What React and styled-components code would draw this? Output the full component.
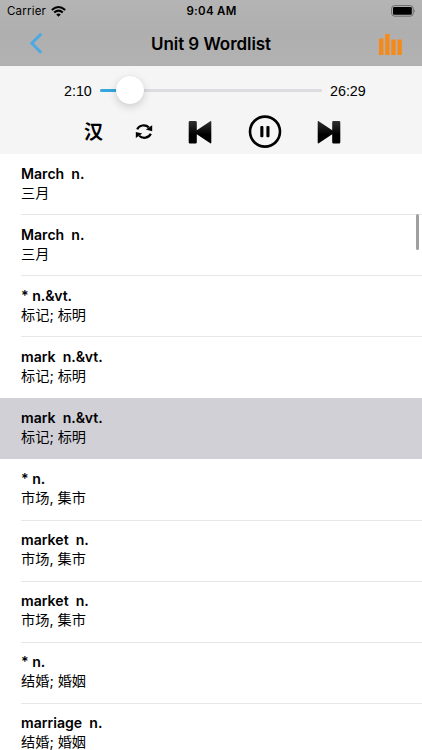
import styled, { createGlobalStyle } from 'styled-components';

const GlobalStyle = createGlobalStyle`
  * {
    box-sizing: border-box;
  }

  body {
    margin: 0;
    overflow: hidden;
    background: #fff;
    color: #000;
    font-family: Inter, 'Noto Sans CJK SC', sans-serif;
  }
`;

const Screen = styled.div`
  position: relative;
  display: flex;
  flex-direction: column;
  width: 422px;
  height: 750px;
  overflow: hidden;
`;

const Header = styled.header`
  flex: none;
  height: 66px;
  background: linear-gradient(#b4b4b4, #afafaf 50%, #b2b2b2);
  border-bottom: 1px solid #b0b0b0;
`;

const StatusBar = styled.div`
  display: grid;
  grid-template-columns: 1fr auto 1fr;
  align-items: center;
  height: 22px;
  padding: 0 6px 0 7px;
`;

const Carrier = styled.div`
  display: flex;
  align-items: center;
  gap: 5px;
  font-size: 11.5px;
  letter-spacing: 0.2px;
`;

const Clock = styled.div`
  font-size: 11.5px;
  font-weight: 600;
  letter-spacing: 0.3px;
`;

const Battery = styled.svg`
  justify-self: end;
`;

const NavBar = styled.div`
  display: grid;
  grid-template-columns: 1fr auto 1fr;
  align-items: center;
  height: 43px;
  padding: 0 19px 0 29px;
`;

const Title = styled.h1`
  margin: 0 10px 0 0;
  font-size: 17px;
  font-weight: 600;
  line-height: 20px;
  letter-spacing: -0.05px;
`;

const ChartIcon = styled.svg`
  justify-self: end;
`;

const Player = styled.section`
  flex: none;
  height: 88px;
  background: #f5f5f5;
`;

const Progress = styled.div`
  display: flex;
  align-items: center;
  height: 49px;
  padding-left: 64px;
`;

const Time = styled.span`
  width: ${(props) => props.$width}px;
  font-family: 'Liberation Sans', sans-serif;
  font-size: 14.3px;
`;

const Track = styled.div`
  position: relative;
  width: 222px;
  height: 3px;
  margin-right: 8px;
  border-radius: 2px;
  background: #dcdce0;
`;

const Played = styled.div`
  width: 30px;
  height: 3px;
  border-radius: 2px;
  background: #35a7dc;
`;

const Knob = styled.div`
  position: absolute;
  top: -13.5px;
  left: 16px;
  width: 28px;
  height: 28px;
  border-radius: 50%;
  background: #fff;
  box-shadow: 0 3px 8px rgba(0, 0, 0, 0.16), 0 0 1px rgba(0, 0, 0, 0.12);
`;

const Controls = styled.div`
  display: flex;
  align-items: center;
  height: 34px;
  padding-left: 84px;
`;

const Control = styled.div`
  display: flex;
  flex: none;
  align-items: center;
  justify-content: center;
  width: ${(props) => props.$width}px;
  height: 34px;
  margin-right: ${(props) => props.$gap || 0}px;
`;

const Glyph = styled.span`
  height: 34px;
  font-family: 'Noto Sans CJK SC', sans-serif;
  font-size: 19px;
  font-weight: 700;
  line-height: 31px;
`;

const List = styled.ul`
  flex: none;
  margin: 0;
  padding: 0;
  list-style: none;
`;

const Row = styled.li`
  height: 61.1px;
  padding-left: 21px;
  background: ${(props) => (props.$selected ? '#d1d0d7' : '#fff')};
`;

const RowBody = styled.div`
  height: 100%;
  padding-top: 9.5px;
  border-bottom: 1px solid ${(props) => (props.$hideLine ? 'transparent' : '#e7e7e8')};
`;

const Word = styled.div`
  height: 19px;
  font-size: 14.1px;
  font-weight: 600;
  line-height: 20px;
  white-space: pre;
`;

const Meaning = styled.div`
  height: 20px;
  font-size: 14.2px;
  line-height: 20px;
  white-space: pre;
`;

const ScrollBar = styled.div`
  position: absolute;
  top: 214px;
  right: 3px;
  width: 3px;
  height: 36px;
  border-radius: 2px;
  background: #a0a0a0;
`;

const words = [
  { word: 'March  n.', meaning: '三月' },
  { word: 'March  n.', meaning: '三月' },
  { word: '* n.&vt.', meaning: '标记; 标明' },
  { word: 'mark  n.&vt.', meaning: '标记; 标明' },
  { word: 'mark  n.&vt.', meaning: '标记; 标明' },
  { word: '* n.', meaning: '市场, 集市' },
  { word: 'market  n.', meaning: '市场, 集市' },
  { word: 'market  n.', meaning: '市场, 集市' },
  { word: '* n.', meaning: '结婚; 婚姻' },
  { word: 'marriage  n.', meaning: '结婚; 婚姻' },
];

const selected = 4;

const App = () => {
  return (
    <Screen>
      <GlobalStyle />
      <Header>
        <StatusBar>
          <Carrier>
            Carrier
            <svg width="15" height="11" viewBox="0 0 15 11" fill="none" stroke="#000" strokeWidth="2">
              <path d="M0.8 4Q7.5 -1.9 14.2 4" />
              <path d="M3.2 6.5Q7.5 2.7 11.8 6.5" />
              <path d="M7.5 10.7L5.2 8.4Q7.5 6.5 9.8 8.4Z" fill="#000" stroke="none" />
            </svg>
          </Carrier>
          <Clock>9:04 AM</Clock>
          <Battery width="25" height="12" viewBox="0 0 25 12">
            <rect x="0.6" y="0.6" width="21.6" height="10.6" rx="3" fill="none" stroke="#6b6b6b" />
            <rect x="2" y="2" width="18.8" height="7.8" rx="1.2" />
            <path d="M23.4 4.2Q25 5.9 23.4 7.6Z" fill="#6b6b6b" />
          </Battery>
        </StatusBar>
        <NavBar>
          <svg width="14" height="22" viewBox="0 0 14 22">
            <path d="M12.3 0.8L2.8 10.2L12.3 19.7" fill="none" stroke="#4ea9e2" strokeWidth="3" />
          </svg>
          <Title>Unit 9 Wordlist</Title>
          <ChartIcon width="24" height="22" viewBox="0 0 24 22" fill="#f58a1b">
            <rect x="0" y="5.5" width="4.4" height="16.5" />
            <rect x="6.2" y="1" width="4.4" height="21" />
            <rect x="12.3" y="6.5" width="4.4" height="15.5" />
            <rect x="18.4" y="6.5" width="4.4" height="15.5" />
          </ChartIcon>
        </NavBar>
      </Header>

      <Player>
        <Progress>
          <Time $width={36}>2:10</Time>
          <Track>
            <Played />
            <Knob />
          </Track>
          <Time $width={40}>26:29</Time>
        </Progress>
        <Controls>
          <Control $width={19} $gap={32}>
            <Glyph>汉</Glyph>
          </Control>
          <Control $width={18} $gap={35}>
            <svg width="18" height="18" viewBox="0 0 18 18">
              <g fill="none" stroke="#000" strokeWidth="2.2">
                <path d="M2.2 6.4A7 6.4 0 0 1 13.8 4.4" />
                <path d="M15.8 10.8A7 6.4 0 0 1 4.2 12.8" />
              </g>
              <path d="M17.2 2.2V8.2L10.8 6.6Z" />
              <path d="M0.8 15V9L7.2 10.6Z" />
            </svg>
          </Control>
          <Control $width={24} $gap={36}>
            <svg width="24" height="24" viewBox="0 0 24 24">
              <defs>
                <linearGradient id="skip" x1="0" y1="0" x2="0" y2="1">
                  <stop offset="0" stopColor="#303030" />
                  <stop offset="0.6" stopColor="#000" />
                </linearGradient>
              </defs>
              <path
                d="M2 1H7.5Q8.8 1 8.8 2.3V10.2L22.3 1.2Q23.3 0.8 23.3 2V22.6Q23.3 23.8 22.3 23.2L8.8 14.2V22.3Q8.8 23.6 7.5 23.6H2Q0.7 23.6 0.7 22.3V2.3Q0.7 1 2 1Z"
                fill="url(#skip)"
              />
            </svg>
          </Control>
          <Control $width={34} $gap={35}>
            <svg width="34" height="34" viewBox="0 0 34 34">
              <circle cx="17" cy="16.6" r="15" fill="none" stroke="#000" strokeWidth="2.6" />
              <rect x="12.3" y="11" width="3.1" height="11.2" rx="1" />
              <rect x="18.4" y="11" width="3.1" height="11.2" rx="1" />
            </svg>
          </Control>
          <Control $width={24}>
            <svg width="24" height="24" viewBox="0 0 24 24">
              <path
                d="M22 1H16.5Q15.2 1 15.2 2.3V10.2L1.7 1.2Q0.7 0.8 0.7 2V22.6Q0.7 23.8 1.7 23.2L15.2 14.2V22.3Q15.2 23.6 16.5 23.6H22Q23.3 23.6 23.3 22.3V2.3Q23.3 1 22 1Z"
                fill="url(#skip)"
              />
            </svg>
          </Control>
        </Controls>
      </Player>

      <List>
        {words.map((item, index) => (
          <Row key={index} $selected={index === selected}>
            <RowBody $hideLine={index === selected || index === selected - 1}>
              <Word>{item.word}</Word>
              <Meaning>{item.meaning}</Meaning>
            </RowBody>
          </Row>
        ))}
      </List>
      <ScrollBar />
    </Screen>
  );
};

export default App;
